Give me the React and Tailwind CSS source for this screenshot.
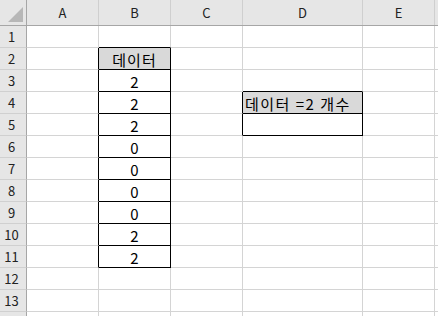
import React from "react";

const COLS = ["A", "B", "C", "D", "E", ""];
const WIDTHS = ["w-[72px]", "w-[72px]", "w-[72px]", "w-[120px]", "w-[72px]", "w-[20px]"];
const ROWS = 14;

const data = {
  "2-1": { t: "데이터", bg: true, align: "center", tr: "tracking-[1px]" },
  "3-1": { t: "2", align: "center" },
  "4-1": { t: "2", align: "center" },
  "5-1": { t: "2", align: "center" },
  "6-1": { t: "0", align: "center" },
  "7-1": { t: "0", align: "center" },
  "8-1": { t: "0", align: "center" },
  "9-1": { t: "0", align: "center" },
  "10-1": { t: "2", align: "center" },
  "11-1": { t: "2", align: "center" },
  "4-3": { t: "데이터 =2 개수", bg: true, align: "left", tr: "tracking-[1.5px]" },
  "5-3": { t: "", align: "left" },
};

const boxed = (r, c) => !!data[`${r}-${c}`];

export default function App() {
  const font = { fontFamily: '"Noto Sans CJK KR", "Noto Sans", sans-serif' };
  return (
    <div className="w-[438px] h-[316px] overflow-hidden bg-white" style={font}>
      <div className="flex h-[26px] bg-[#e6e6e6] border-b border-[#a6a6a6]">
        <div className="w-[27px] shrink-0 border-r border-[#a6a6a6] flex items-end justify-end pr-[3px] pb-[3px]">
          <svg width="15" height="15" viewBox="0 0 15 15">
            <polygon points="15,0 15,15 0,15" fill="#b7b7b7" />
          </svg>
        </div>
        {COLS.map((c, i) => (
          <div
            key={i}
            className={`${WIDTHS[i]} shrink-0 border-r border-[#cfcfcf] flex items-center justify-center text-[13px] text-[#222] leading-none`}
          >
            {c}
          </div>
        ))}
      </div>
      {Array.from({ length: ROWS }, (_, k) => {
        const r = k + 1;
        return (
          <div key={r} className="flex h-[22px]">
            <div className="w-[27px] shrink-0 bg-[#e6e6e6] border-r border-b border-r-[#a6a6a6] border-b-[#d0d0d0] flex items-center justify-center pr-[3px] text-[13px] text-[#222] leading-none">
              {r < ROWS ? r : ""}
            </div>
            {COLS.map((_, c) => {
              const d = data[`${r}-${c}`];
              const rightBlack = boxed(r, c) || boxed(r, c + 1);
              const bottomBlack = boxed(r, c) || boxed(r + 1, c);
              const rb = rightBlack ? "border-r border-r-black" : "border-r border-r-[#d4d4d4]";
              const bb = bottomBlack ? "border-b border-b-black" : "border-b border-b-[#d4d4d4]";
              const bg = d && d.bg ? "bg-[#d9d9d9]" : "bg-white";
              const al = d && d.align === "left" ? "justify-start pl-[2px]" : "justify-center";
              const tr = d && d.tr ? d.tr : "";
              return (
                <div
                  key={c}
                  className={`${WIDTHS[c]} shrink-0 ${rb} ${bb} ${bg} ${al} ${tr} flex items-center pt-[1px] text-[15px] text-black leading-none whitespace-nowrap`}
                >
                  {d ? d.t : ""}
                </div>
              );
            })}
          </div>
        );
      })}
    </div>
  );
}
